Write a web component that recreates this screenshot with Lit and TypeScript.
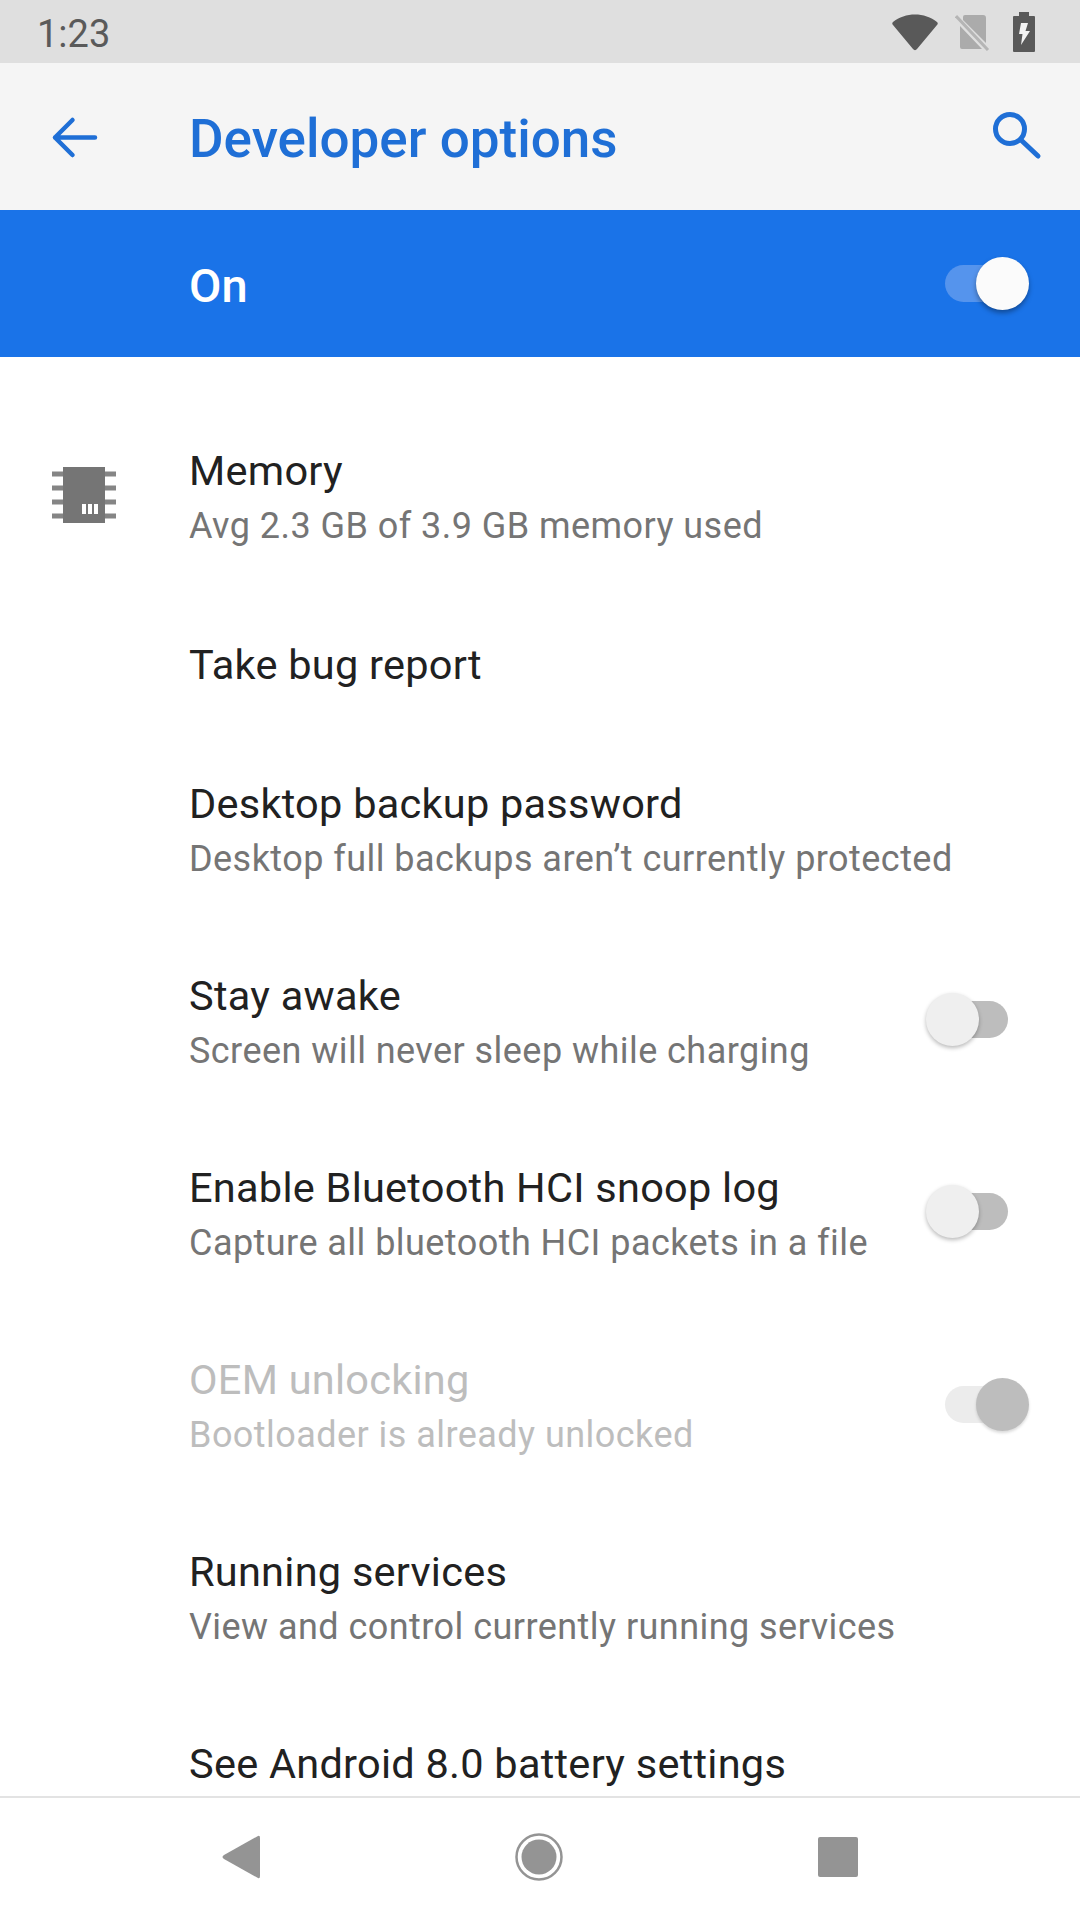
import { LitElement, html, css, svg } from "lit";
import { customElement } from "lit/decorators.js";

type Row = { t: string; s?: string; sw?: "on" | "off" | "dis"; cls?: string; icon?: boolean };

const rows: Row[] = [
  { t: "Memory", s: "Avg 2.3 GB of 3.9 GB memory used", icon: true },
  { t: "Take bug report", cls: "short" },
  { t: "Desktop backup password", s: "Desktop full backups aren’t currently protected" },
  { t: "Stay awake", s: "Screen will never sleep while charging", sw: "off" },
  { t: "Enable Bluetooth HCI snoop log", s: "Capture all bluetooth HCI packets in a file", sw: "off" },
  { t: "OEM unlocking", s: "Bootloader is already unlocked", sw: "dis", cls: "disabled" },
  { t: "Running services", s: "View and control currently running services" },
  { t: "See Android 8.0 battery settings", s: " " },
];

const pins = [0, 1, 2, 3].map((i) => svg`<rect x="0" y="${4.5 + i * 14}" width="64" height="5" fill="#858585"/>`);

@customElement("app-root")
export class AppRoot extends LitElement {
  static styles = css`
    :host { display: block; width: 1080px; height: 1920px; background: #fff; font-family: Roboto, "Noto Sans", sans-serif; overflow: hidden; }
    .page { display: flex; flex-direction: column; height: 1920px; }
    .status { height: 63px; flex: none; background: #dfdfdf; display: flex; align-items: center; padding: 0 44px 0 37px; color: #5a5a5a; font-size: 38px; }
    .status .time { flex: 1; margin-top: 4px; }
    .status svg { display: block; }
    .status .wifi { margin-right: 17px; }
    .status .sim { margin-right: 21px; }
    .toolbar { height: 147px; flex: none; background: #f5f5f5; display: flex; align-items: center; padding: 0 37px 0 51px; color: #1f6fd6; }
    .toolbar h1 { flex: 1; margin: 0 0 0 90px; font-size: 53px; font-weight: 500; line-height: 1; padding-top: 6px; }
    .master { height: 147px; flex: none; background: #1a73e8; display: flex; align-items: center; padding: 0 51px 0 189px; color: #fff; font-size: 47px; font-weight: 500; box-sizing: border-box; }
    .master .lbl { flex: 1; padding-top: 3px; }
    .list { flex: 1; min-height: 0; overflow: hidden; padding-top: 45px; }
    .row { height: 192px; box-sizing: border-box; display: flex; align-items: center; padding-left: 52px; padding-right: 48px; }
    .row.short { height: 141px; }
    .slot { width: 137px; flex: none; display: flex; align-items: center; margin-bottom: 4px; }
    .text { flex: 1; min-width: 0; }
    .title { font-size: 41.5px; color: #212121; line-height: 54px; white-space: nowrap; letter-spacing: 0.25px; }
    .sub { font-size: 36px; color: #757575; line-height: 54px; min-height: 54px; padding-top: 1px; white-space: nowrap; letter-spacing: 0.45px; }
    .disabled .title, .disabled .sub { color: #bdbdbd; }
    .sw { position: relative; width: 84px; height: 58px; flex: none; }
    .sw .track { position: absolute; left: 0; top: 10px; width: 70px; height: 37px; border-radius: 19px; }
    .sw .thumb { position: absolute; top: 2px; width: 53px; height: 53px; border-radius: 50%; }
    .sw.master-sw .track { left: 0; background: #5594ed; }
    .sw.master-sw .thumb { left: 31px; background: #fbfbfb; box-shadow: 0 3px 5px rgba(0, 0, 0, 0.35); }
    .sw.off { margin-right: 22px; margin-bottom: 7px; }
    .sw.off .track { left: 14px; width: 68px; background: #bdbdbd; }
    .sw.off .thumb { left: 0; background: #efefef; box-shadow: 0 2px 4px rgba(0, 0, 0, 0.28); }
    .sw.dis { margin-right: 3px; margin-bottom: 4px; }
    .sw.dis .track { left: 0; background: #ececec; }
    .sw.dis .thumb { left: 31px; background: #bdbdbd; box-shadow: 0 2px 3px rgba(0, 0, 0, 0.15); }
    .nav { height: 124px; flex: none; box-sizing: border-box; border-top: 2px solid #e3e3e3; background: #fff; display: flex; align-items: center; padding-left: 221px; padding-bottom: 4px; }
    .nav svg { display: block; }
    .nav .home { margin-left: 254px; }
    .nav .sq { margin-left: 255px; }
  `;

  private sw(kind: string) {
    return html`<div class="sw ${kind}"><div class="track"></div><div class="thumb"></div></div>`;
  }

  render() {
    return html`<div class="page">
      <div class="status">
        <span class="time">1:23</span>
        <svg class="wifi" width="46" height="38" viewBox="0 0 46 38"><path d="M1 9 C13 -1 33 -1 45 9 C46 10 46 11 45 12 L25 36 C24 37.5 22 37.5 21 36 L1 12 C0 11 0 10 1 9Z" fill="#595959"/></svg>
        <svg class="sim" width="36" height="38" viewBox="0 0 36 38"><path d="M8 4 Q8 2 10 2 L28 2 Q31 2 31 5 L31 30 L8 7Z M5 13 L27 36 L7 36 Q5 36 5 34Z" fill="#ababab"/><path d="M1 3 L33 37" stroke="#b5b5b5" stroke-width="3" fill="none"/></svg>
        <svg width="24" height="40" viewBox="0 0 24 40"><path d="M7 0 H17 V4 H22 Q23 4 23 5 V39 Q23 40 22 40 H2 Q1 40 1 39 V5 Q1 4 2 4 H7Z" fill="#595959"/><path d="M9 11 H16 L13.5 19 H18 L9 33 L10.5 22 H7Z" fill="#f2f2f2"/></svg>
      </div>
      <div class="toolbar">
        <svg width="48" height="48" viewBox="0 0 48 48" fill="none" stroke="#1f6fd6" stroke-width="4.5" stroke-linecap="round" stroke-linejoin="round"><path d="M44 24.5 H4 M21.5 7 L4 24.5 L21.5 42"/></svg>
        <h1>Developer options</h1>
        <svg width="52" height="52" viewBox="0 0 52 52" fill="none" stroke="#1f6fd6" stroke-linecap="round"><circle cx="19" cy="18" r="14.5" stroke-width="5"/><path d="M30 29 L47 45" stroke-width="5"/></svg>
      </div>
      <div class="master"><span class="lbl">On</span>${this.sw("master-sw")}</div>
      <div class="list">
        ${rows.map(
          (r) => html`<div class="row ${r.cls ?? ""}">
            <div class="slot">${r.icon ? html`<svg width="64" height="58" viewBox="0 0 64 58">${pins}<rect x="11" y="0" width="42" height="56" fill="#757575"/><path d="M30 37h4v10h-4zM36 37h4v10h-4zM42 37h4v10h-4z" fill="#fff"/></svg>` : ""}</div>
            <div class="text">
              <div class="title">${r.t}</div>
              ${r.s ? html`<div class="sub">${r.s}</div>` : ""}
            </div>
            ${r.sw ? this.sw(r.sw) : ""}
          </div>`
        )}
      </div>
      <div class="nav">
        <svg width="40" height="46" viewBox="0 0 40 46"><path d="M37 2 Q39 1 39 4 V42 Q39 45 37 44 L3 25 Q0 23 3 21Z" fill="#949494"/></svg>
        <svg class="home" width="48" height="48" viewBox="0 0 48 48"><circle cx="24" cy="24" r="22.5" fill="none" stroke="#949494" stroke-width="2.5"/><circle cx="24" cy="24" r="17.5" fill="#949494"/></svg>
        <svg class="sq" width="40" height="40" viewBox="0 0 40 40"><rect width="40" height="40" rx="2" fill="#949494"/></svg>
      </div>
    </div>`;
  }
}
